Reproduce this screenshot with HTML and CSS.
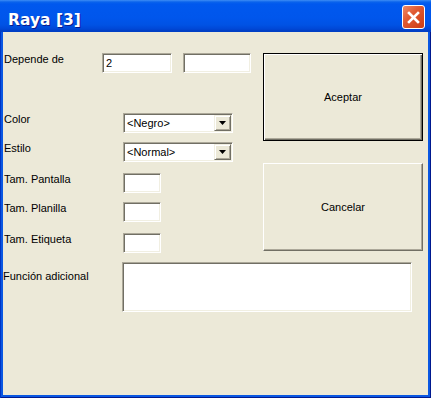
FILE: index.html
```html
<!DOCTYPE html>
<html lang="es">
<head>
    <meta charset="UTF-8">
    <title>Raya [3]</title>
    <link rel="stylesheet" href="styles.css">
</head>
<body>
    <div class="window">
        <div class="titlebar">
            <span class="title">Raya [3]</span>
            <button class="close" type="button">
                <svg width="21" height="21" viewBox="0 0 21 21">
                    <path d="M6 6 L15 15 M15 6 L6 15" stroke="#fff" stroke-width="2.6" stroke-linecap="square"/>
                </svg>
            </button>
        </div>
        <div class="frame">
            <div class="client">
                <div class="main">
                    <div class="fields">
                        <div class="row">
                            <label class="label label-short">Depende de</label>
                            <input class="edit edit-a" type="text" value="2">
                            <input class="edit edit-b" type="text">
                        </div>
                        <div class="row row-color">
                            <label class="label">Color</label>
                            <div class="combo">
                                <span class="combo-text">&lt;Negro&gt;</span>
                                <span class="drop"><svg width="7" height="4" viewBox="0 0 7 4"><polygon points="0,0 7,0 3.5,4" fill="#000"/></svg></span>
                            </div>
                        </div>
                        <div class="row row-near">
                            <label class="label">Estilo</label>
                            <div class="combo">
                                <span class="combo-text">&lt;Normal&gt;</span>
                                <span class="drop"><svg width="7" height="4" viewBox="0 0 7 4"><polygon points="0,0 7,0 3.5,4" fill="#000"/></svg></span>
                            </div>
                        </div>
                        <div class="row row-far">
                            <label class="label">Tam. Pantalla</label>
                            <input class="edit edit-small" type="text">
                        </div>
                        <div class="row row-near">
                            <label class="label">Tam. Planilla</label>
                            <input class="edit edit-small" type="text">
                        </div>
                        <div class="row row-far">
                            <label class="label">Tam. Etiqueta</label>
                            <input class="edit edit-small" type="text">
                        </div>
                    </div>
                    <div class="buttons">
                        <div class="btn btn-default">Aceptar</div>
                        <div class="btn">Cancelar</div>
                    </div>
                </div>
                <div class="row row-funcion">
                    <label class="label label-funcion">Función adicional</label>
                    <textarea class="memo"></textarea>
                </div>
            </div>
        </div>
    </div>
</body>
</html>
```

FILE: styles.css
```css
body {
    margin: 0;
    background: #fff;
    font-family: 'Liberation Sans', Arial, sans-serif;
    font-size: 11px;
    color: #000;
}

.window {
    width: 431px;
    height: 398px;
    display: flex;
    flex-direction: column;
}

.titlebar {
    height: 32px;
    flex: 0 0 32px;
    box-sizing: border-box;
    display: flex;
    align-items: flex-start;
    justify-content: space-between;
    padding: 5px 6px 0 8px;
    background: linear-gradient(to bottom, #3d8df5 0, #0a63ec 2px, #0058ee 4px, #0056ec 18px, #0052e4 25px, #0047d6 29px, #003dc2 31px, #0040c8 32px);
}

.title {
    margin-top: 6px;
    font-family: 'DejaVu Sans', Verdana, sans-serif;
    font-weight: bold;
    font-size: 15.5px;
    line-height: 18px;
    color: #fff;
    text-shadow: 1px 1px #0a1a8c;
}

.close {
    width: 23px;
    height: 24px;
    padding: 0;
    display: flex;
    align-items: center;
    justify-content: center;
    border: 1px solid #fff;
    border-radius: 3px;
    background: linear-gradient(135deg, #ee8a68 0%, #e05a33 40%, #cc3c12 100%);
}

.frame {
    flex: 1;
    display: flex;
    padding: 0 3px 3px;
    background: #0a57e2;
    box-shadow: inset 1px 0 #0034c4, inset -1px 0 #00198f, inset 0 -1px #00198f;
}

.client {
    flex: 1;
    background: #ece9d8;
    padding-top: 21px;
}

.main {
    display: flex;
    height: 200px;
}

.fields {
    width: 259px;
    padding-left: 1px;
}

.row {
    display: flex;
    align-items: flex-start;
}

.row-color {
    margin-top: 40px;
}

.row-near {
    margin-top: 9px;
}

.row-far {
    margin-top: 11px;
}

.label {
    width: 119px;
    flex: 0 0 119px;
    line-height: 13px;
}

.label-short {
    width: 98px;
    flex: 0 0 98px;
}

.edit,
.combo,
.memo {
    box-sizing: border-box;
    height: 20px;
    margin: 0;
    background: #fff;
    border: 1px solid;
    border-color: #aca899 #fff #fff #aca899;
    box-shadow: inset 1px 1px #716f64, inset -1px -1px #f1efe2;
    font-family: 'Liberation Sans', Arial, sans-serif;
    font-size: 11px;
    color: #000;
    outline: none;
}

.edit {
    padding: 0 3px;
}

.edit-a {
    width: 70px;
}

.edit-b {
    width: 68px;
    margin-left: 11px;
}

.edit-small {
    width: 38px;
}

.combo {
    width: 110px;
    display: flex;
    align-items: center;
    padding: 1px;
}

.combo-text {
    flex: 1;
    padding-left: 2px;
    line-height: 16px;
}

.drop {
    width: 17px;
    height: 16px;
    box-sizing: border-box;
    display: flex;
    align-items: center;
    justify-content: center;
    background: #ece9d8;
    border: 1px solid;
    border-color: #f1efe2 #716f64 #716f64 #f1efe2;
    box-shadow: inset 1px 1px #fff, inset -1px -1px #aca899;
}

.buttons {
    width: 160px;
    display: flex;
    flex-direction: column;
    gap: 22px;
}

.btn {
    height: 88px;
    box-sizing: border-box;
    display: flex;
    align-items: center;
    justify-content: center;
    background: #ece9d8;
    border: 1px solid;
    border-color: #fff #716f64 #716f64 #fff;
    box-shadow: inset -1px -1px #aca899;
}

.btn-default {
    border-color: #000;
    box-shadow: inset 1px 1px #fff, inset -1px -1px #716f64, inset -2px -2px #aca899;
}

.row-funcion {
    margin-top: 9px;
}

.label-funcion {
    margin-top: 8px;
}

.memo {
    width: 290px;
    height: 50px;
    resize: none;
    padding: 2px;
}
```
